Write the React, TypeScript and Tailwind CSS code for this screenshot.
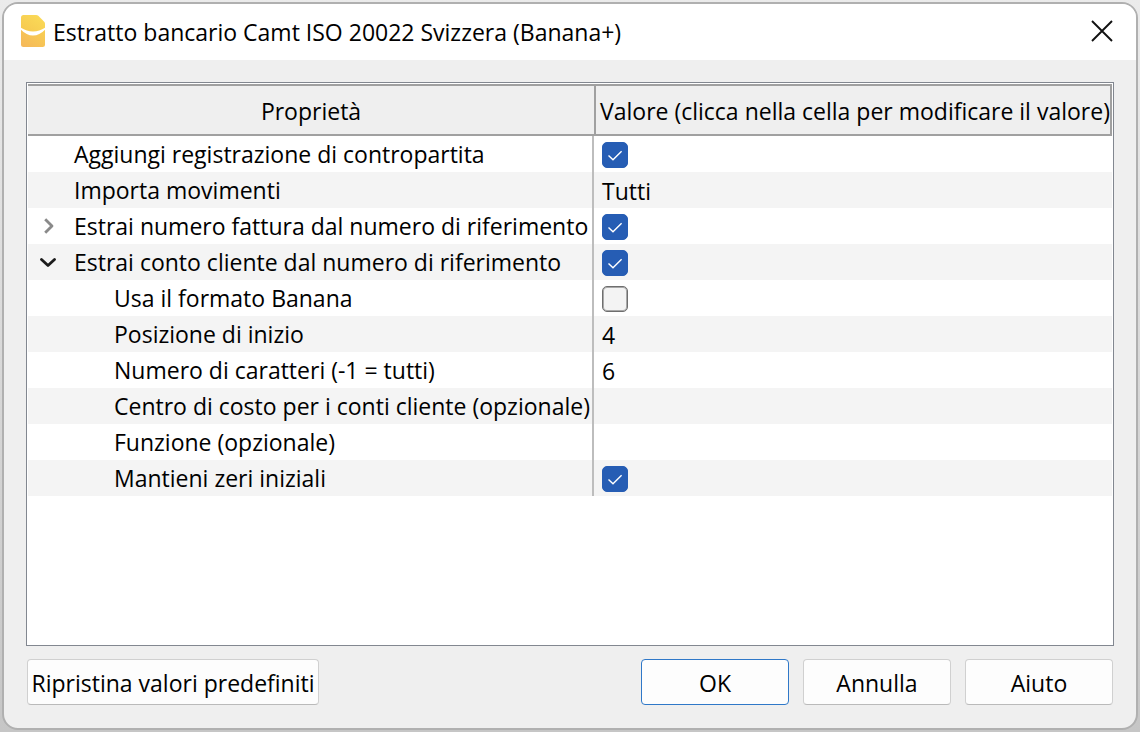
import { useState } from "react";

type Row = {
  id: string;
  label: string;
  child?: boolean;
  arrow?: "open" | "closed";
  checked?: boolean;
  value?: string;
};

const rows: Row[] = [
  { id: "contra", label: "Aggiungi registrazione di contropartita", checked: true },
  { id: "transactions", label: "Importa movimenti", value: "Tutti" },
  { id: "invoice", label: "Estrai numero fattura dal numero di riferimento", arrow: "closed", checked: true },
  { id: "customer", label: "Estrai conto cliente dal numero di riferimento", arrow: "open", checked: true },
  { id: "format", label: "Usa il formato Banana", child: true, checked: false },
  { id: "start", label: "Posizione di inizio", child: true, value: "4" },
  { id: "count", label: "Numero di caratteri (-1 = tutti)", child: true, value: "6" },
  { id: "costcenter", label: "Centro di costo per i conti cliente (opzionale)", child: true, value: "" },
  { id: "function", label: "Funzione (opzionale)", child: true, value: "" },
  { id: "zeros", label: "Mantieni zeri iniziali", child: true, checked: true },
];

function AppLogo() {
  return (
    <svg width="24" height="32" viewBox="0 0 24 32" aria-hidden="true">
      <defs>
        <linearGradient id="top" x1="0" y1="1" x2="1" y2="0">
          <stop offset="0" stopColor="#f6c850" />
          <stop offset="1" stopColor="#fbdc58" />
        </linearGradient>
        <linearGradient id="bottom" x1="0" y1="1" x2="1" y2="0">
          <stop offset="0" stopColor="#f5b75a" />
          <stop offset="1" stopColor="#f8cf52" />
        </linearGradient>
      </defs>
      <path d="M2.5 0H15.2Q16.4 0 17.3.8L23.2 6.7Q24 7.5 24 8.7V12.8Q18.5 16.4 12 16.4T0 12.8V2.5Q0 0 2.5 0Z" fill="url(#top)" />
      <path d="M0 14.8Q5.5 20.6 12 20.6T24 14.8V29.5Q24 32 21.5 32H2.5Q0 32 0 29.5Z" fill="url(#bottom)" />
    </svg>
  );
}

function Arrow({ open }: { open: boolean }) {
  return open ? (
    <svg width="16" height="16" viewBox="0 0 16 16" fill="none" stroke="#1c1c1c" strokeWidth="2.8" strokeLinecap="round" strokeLinejoin="round">
      <path d="M1.5 5.5 8 11.5l6.5-6" />
    </svg>
  ) : (
    <svg width="16" height="16" viewBox="0 0 16 16" fill="none" stroke="#8a8a8a" strokeWidth="2.8" strokeLinecap="butt" strokeLinejoin="round">
      <path d="M5.2 1.2 12 8l-6.8 6.8" />
    </svg>
  );
}

function CheckBox({ id, initial }: { id: string; initial: boolean }) {
  const [checked, setChecked] = useState(initial);
  return (
    <span className="grid size-[26px] place-items-center">
      <input
        id={id}
        type="checkbox"
        checked={checked}
        onChange={(e) => setChecked(e.target.checked)}
        className="col-start-1 row-start-1 size-[26px] appearance-none rounded-[5px] border border-[#6e6e6e] bg-[#f3f3f3] ring-1 ring-inset ring-[#a8a8a8] checked:border-[#265db4] checked:bg-[#265db4] checked:ring-[#265db4]"
      />
      {checked && (
        <svg className="pointer-events-none col-start-1 row-start-1" width="26" height="26" viewBox="0 0 26 26" fill="none" stroke="#fff" strokeWidth="1.4">
          <path d="M6.5 13.4 11 17.8l8.6-8.6" />
        </svg>
      )}
    </span>
  );
}

const buttonClass =
  "h-[46px] rounded-[4px] border border-[#d0d0d0] border-b-[#bababa] bg-[#fdfdfd] pt-0.5";

export default function App() {
  return (
    <div className="flex min-h-screen flex-col bg-linear-to-b from-[#ebebeb] to-[#c6c6c6] px-0.5 py-0.5 font-['Open_Sans','Noto_Sans',sans-serif] text-[23px] leading-[30px] text-black">
      <main className="flex flex-1 flex-col overflow-hidden rounded-2xl border-2 border-[#b0b0b0] bg-[#efefef]">
        <header className="flex h-14 items-center gap-2 bg-white pr-5 pb-0.5 pl-[17px]">
          <AppLogo />
          <h1 className="flex-1 pt-0.5">Estratto bancario Camt ISO 20022 Svizzera (Banana+)</h1>
          <button aria-label="Chiudi" className="grid size-7 place-items-center">
            <svg width="22" height="22" viewBox="0 0 22 22" stroke="#111" strokeWidth="1.9">
              <path d="m1 1 20 20M21 1 1 21" />
            </svg>
          </button>
        </header>
        <div className="flex flex-1 flex-col gap-[13px] px-[22px] pt-[22px] pb-[23px]">
          <div className="flex-1 border border-[#828790] bg-white p-px">
            <table className="w-full table-fixed border-separate border-spacing-0">
              <colgroup>
                <col className="w-[566px]" />
                <col />
              </colgroup>
              <thead>
                <tr className="h-[52px] bg-[#efefef]">
                  <th className="border-y-2 border-[#a0a0a0] p-0 pt-0.5 font-normal">Proprietà</th>
                  <th className="border-2 border-[#a0a0a0] p-0 pt-0.5 pl-1 text-left font-normal whitespace-nowrap">
                    Valore (clicca nella cella per modificare il valore)
                  </th>
                </tr>
              </thead>
              <tbody>
                {rows.map((row) => (
                  <tr key={row.id} className="h-9 even:bg-[#f4f4f4]">
                    <td className="border-r-2 border-[#bdbdbd] p-0">
                      <div className={row.child ? "flex items-center pl-[86px]" : "flex items-center pl-3"}>
                        {!row.child && (
                          <span className="flex w-[34px] items-center">
                            {row.arrow && (
                              <button aria-label={row.arrow === "open" ? "Comprimi" : "Espandi"}>
                                <Arrow open={row.arrow === "open"} />
                              </button>
                            )}
                          </span>
                        )}
                        <label htmlFor={row.checked === undefined ? undefined : row.id} className="pb-px whitespace-nowrap">
                          {row.label}
                        </label>
                      </div>
                    </td>
                    <td className="p-0 pt-0.5 pl-2">
                      {row.checked === undefined ? row.value : <CheckBox id={row.id} initial={row.checked} />}
                    </td>
                  </tr>
                ))}
              </tbody>
            </table>
          </div>
          <footer className="flex items-center gap-[14px] px-px">
            <button className={`${buttonClass} mr-auto w-[292px] whitespace-nowrap`}>Ripristina valori predefiniti</button>
            <button className="h-[46px] w-[148px] rounded-[4px] border border-[#2f78c8] bg-[#fdfdfd] pt-0.5">OK</button>
            <button className={`${buttonClass} w-[148px]`}>Annulla</button>
            <button className={`${buttonClass} w-[148px]`}>Aiuto</button>
          </footer>
        </div>
      </main>
    </div>
  );
}
